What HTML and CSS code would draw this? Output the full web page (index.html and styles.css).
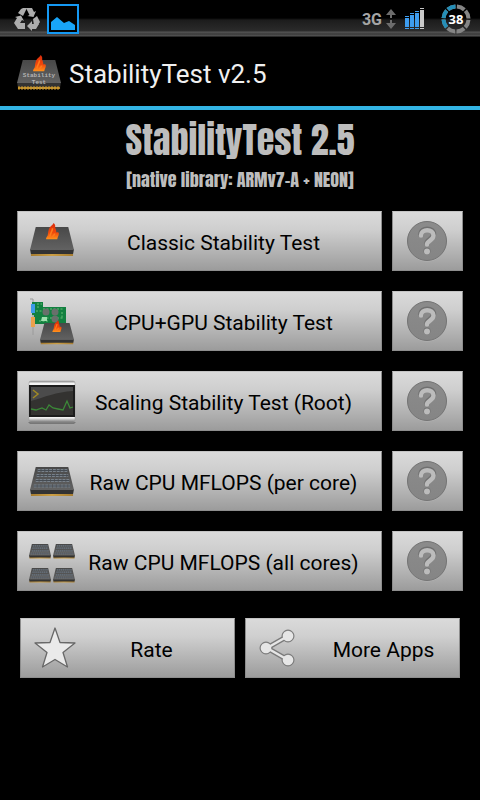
FILE: index.html
```html
<!DOCTYPE html>
<html lang="en">
<head>
<meta charset="utf-8">
<meta name="viewport" content="width=device-width, initial-scale=1">
<title>StabilityTest v2.5</title>
<link rel="stylesheet" href="styles.css">
</head>
<body>
<svg class="defs" aria-hidden="true">
  <defs>
    <linearGradient id="slab" x1="0" y1="0" x2="0" y2="1"><stop offset="0" stop-color="#484848"/><stop offset="1" stop-color="#626262"/></linearGradient>
    <linearGradient id="fire" x1="0" y1="0" x2="0" y2="1"><stop offset="0" stop-color="#d92a0a"/><stop offset=".6" stop-color="#f04a0c"/><stop offset="1" stop-color="#ff941c"/></linearGradient>
    <linearGradient id="gold"><stop offset="0" stop-color="#a67c30"/><stop offset=".5" stop-color="#cc9f45"/><stop offset="1" stop-color="#a67c30"/></linearGradient>
    <linearGradient id="metal" x1="0" y1="0" x2="0" y2="1"><stop offset="0" stop-color="#8c8c8c"/><stop offset=".06" stop-color="#f4f4f4"/><stop offset=".9" stop-color="#f0f0f0"/><stop offset="1" stop-color="#777"/></linearGradient>
    <linearGradient id="disc" x1="0" y1="0" x2="0" y2="1"><stop offset="0" stop-color="#8b8b8b"/><stop offset="1" stop-color="#858585"/></linearGradient>
    <symbol id="chip" viewBox="0 0 46 30" preserveAspectRatio="none">
      <path d="M1 25h44v4H1z" fill="url(#gold)"/>
      <path d="M0 22l1 5h44l1-5z" fill="#333"/>
      <path d="M6 0h34l6 23H0z" fill="url(#slab)"/>
    </symbol>
    <symbol id="flame" viewBox="0 0 16 18">
      <path d="M9 0c1 1 2 2 1.500 4 0 1 1.500 3 1 5 1.500-.5 2.500 0 2.500 1 0 2-1 3-1.500 5.500H2c-.5-1.500 1-2.500 1.500-4C4 9 4 6 5.500 4 6.500 2.500 8.500 2 9 0z" fill="url(#fire)"/>
      <path d="M8 5c0 3-2 4-2.500 8M10 10c0 2-2 2-2.500 4" fill="none" stroke="#ff7a1a" stroke-width="1.500"/>
    </symbol>
    <symbol id="grid-chip" viewBox="0 0 46 30" preserveAspectRatio="none">
      <use href="#chip" width="46" height="30"/>
      <g fill="none" stroke="#77818b" stroke-width="3" stroke-dasharray="3 1">
        <path d="M8 3.500h31"/><path d="M7 8.500h33"/><path d="M6 13.500h35"/><path d="M4 19h38"/>
      </g>
      <g fill="none" stroke="#454b52" stroke-width="1"><path d="M8 3.500h31M7 8.500h33M6 13.500h35M4 19h38"/></g>
    </symbol>
    <symbol id="help" viewBox="0 0 42 42">
      <circle cx="20" cy="21.500" r="20" fill="#b4b4b4"/>
      <circle cx="20" cy="21" r="19.500" fill="url(#disc)" stroke="#747474"/>
      <path d="M14 15.500c0-7 12.500-7 12.500 0 0 5-6.500 5-6.500 9" transform="translate(0 -1)" fill="none" stroke="#707070" stroke-width="5.500" stroke-linecap="round"/>
      <path d="M14 15.500c0-7 12.500-7 12.500 0 0 5-6.500 5-6.500 9" fill="none" stroke="#bcbcbc" stroke-width="4.500" stroke-linecap="round"/>
      <circle cx="20" cy="31" r="3.500" fill="#707070"/>
      <circle cx="20" cy="31.500" r="3" fill="#bcbcbc"/>
    </symbol>
  </defs>
</svg>

<div class="status">
  <svg class="recycle" viewBox="0 0 26 24" aria-hidden="true">
    <g fill="#adadad">
      <path d="M9 1h4l-4 8-5-3 3-4z"/>
      <path d="M12 1h6l2 4 2-1-2.500 6-6-1 2-1z"/>
      <path d="M1 10l6-1.500 3 5.500-2-1-2 3H0l3-5z"/>
      <path d="M0 16l1 0h10v6H4z"/>
      <path d="M19 12l4-3 3 6-2 3h-4z"/>
      <path d="M25 17l-3 5h-4v2l-5-5 5-5v3z"/>
    </g>
  </svg>
  <svg class="picture" viewBox="0 0 32 30" aria-hidden="true">
    <rect x="1" y="1" width="30" height="28" fill="#000" stroke="#1599f4" stroke-width="2"/>
    <path d="M4 26v-8l6-5 7 6 5-2 6 4v5z" fill="#18a5f8"/>
  </svg>
  <span class="network">3G</span>
  <svg class="arrows" viewBox="0 0 10 20" aria-hidden="true"><path d="M5 0l5 6H6v3H4V6H0zM5 20l5-6H6v-3H4v3H0z" fill="#6d6d6d"/></svg>
  <svg class="signal" viewBox="0 0 20 22" aria-hidden="true">
    <g fill="#3d9df0"><path d="M0 10h4v9H0zM5 7h4v12H5zM10 5h4v14h-4z"/><path d="M0 20h4v1H0zM5 20h4v1H5zM10 20h4v1h-4zM0 8h4v1H0zM5 5h4v1H5zM10 3h4v1h-4z"/></g>
    <path d="M15 2h4v17h-4zM15 20h4v1h-4zM15 0h4v1h-4z" fill="#c9c9c9"/>
  </svg>
  <span class="battery">
    <svg viewBox="0 0 30 30" aria-hidden="true">
      <g fill="none" stroke-width="4">
        <circle cx="15" cy="15" r="12.500" pathLength="80" stroke="#858585" stroke-dasharray="8.500 1.500" transform="rotate(-86 15 15)"/>
        <circle cx="15" cy="15" r="12.500" pathLength="80" stroke="#258fb8" stroke-dasharray="0 50 8.500 1.500 8.500 1.500 8.500 80" transform="rotate(-86 15 15)"/>
      </g>
    </svg>
    <span class="level">38</span>
  </span>
</div>

<header class="bar">
  <svg class="logo" viewBox="0 0 46 40" aria-hidden="true">
    <use href="#chip" x="1" y="8" width="44" height="30"/>
    <path d="M2 36h42" stroke="#c8962c" stroke-width="3" stroke-dasharray="2 1"/>
    <use href="#flame" x="15" y="3" width="17" height="19"/>
    <text class="logo-text" x="23" y="25">Stability</text>
    <text class="logo-text" x="23" y="32">Test</text>
  </svg>
  <span class="bar-title">StabilityTest v2.5</span>
</header>

<main>
  <h1>StabilityTest 2.5</h1>
  <p class="library">[native library: ARMv7-A + NEON]</p>

  <div class="tests">
    <div class="row">
      <button class="btn" type="button">
        <svg class="icon" viewBox="0 0 48 48" aria-hidden="true"><use href="#chip" x="2" y="10" width="44" height="30"/><use href="#flame" x="16" y="6" width="17" height="19"/></svg>
        <span class="label">Classic Stability Test</span>
      </button>
      <button class="btn help" type="button" aria-label="About the classic test"><svg viewBox="0 0 42 42"><use href="#help"/></svg></button>
    </div>
    <div class="row">
      <button class="btn" type="button">
        <svg class="icon" viewBox="0 0 48 48" aria-hidden="true">
          <path d="M2 2h3v36" fill="none" stroke="#9a9a9a"/>
          <path d="M4 5h11v5h23v17H6V18H4z" fill="#128040"/>
          <path d="M9 7h5M9 10h3M8 14h6M15 12h20M11 24h9M34 15v6M15 21h20" stroke="#67bd74" stroke-width="1" stroke-dasharray="2 1.500"/>
          <path d="M14 20h5v4h-6z" fill="#9edfae"/>
          <path d="M3 7h4v9H3z" fill="#3e9be8"/><path d="M3 20h4v10H3z" fill="#eba14c"/>
          <circle cx="18" cy="15" r="3.500" fill="#68706b"/><circle cx="27" cy="15" r="3.500" fill="#68706b"/><circle cx="27" cy="22" r="3.500" fill="#68706b"/>
          <use href="#chip" x="12" y="26" width="34" height="22"/>
          <use href="#flame" x="23" y="23" width="12" height="14"/>
        </svg>
        <span class="label">CPU+GPU Stability Test</span>
      </button>
      <button class="btn help" type="button" aria-label="About the CPU and GPU test"><svg viewBox="0 0 42 42"><use href="#help"/></svg></button>
    </div>
    <div class="row">
      <button class="btn" type="button">
        <svg class="icon" viewBox="0 0 48 48" aria-hidden="true">
          <path d="M0 45h48l-2 2H2z" fill="#777"/>
          <rect x="1" y="4" width="46" height="41" rx="2" fill="url(#metal)" stroke="#999" stroke-width=".5"/>
          <rect x="1" y="8" width="46" height="32" fill="#1c1c1c"/>
          <rect x="3" y="10" width="42" height="28" fill="#333230"/>
          <path d="M3 10h42v4C28 15 17 20 3 24z" fill="#4b4b4b"/>
          <path d="M5 13l5 4-5 4" fill="none" stroke="#a18a24" stroke-width="1.500"/>
          <path d="M3 32l5 1 6-2 4 2 3-5 4 3 5 1 5 1 4-9 3 7 3-1" fill="none" stroke="#3c8838" stroke-width="1.300"/>
        </svg>
        <span class="label">Scaling Stability Test (Root)</span>
      </button>
      <button class="btn help" type="button" aria-label="About the scaling test"><svg viewBox="0 0 42 42"><use href="#help"/></svg></button>
    </div>
    <div class="row">
      <button class="btn" type="button">
        <svg class="icon" viewBox="0 0 48 48" aria-hidden="true"><use href="#grid-chip" x="2" y="10" width="44" height="30"/></svg>
        <span class="label">Raw CPU MFLOPS (per core)</span>
      </button>
      <button class="btn help" type="button" aria-label="About MFLOPS per core"><svg viewBox="0 0 42 42"><use href="#help"/></svg></button>
    </div>
    <div class="row">
      <button class="btn" type="button">
        <svg class="icon" viewBox="0 0 48 48" aria-hidden="true">
          <use href="#grid-chip" x="1" y="7" width="22" height="15"/><use href="#grid-chip" x="25" y="7" width="22" height="15"/>
          <use href="#grid-chip" x="1" y="31" width="22" height="15"/><use href="#grid-chip" x="25" y="31" width="22" height="15"/>
        </svg>
        <span class="label">Raw CPU MFLOPS (all cores)</span>
      </button>
      <button class="btn help" type="button" aria-label="About MFLOPS on all cores"><svg viewBox="0 0 42 42"><use href="#help"/></svg></button>
    </div>
  </div>

  <div class="row links">
    <button class="btn" type="button">
      <svg class="icon" viewBox="0 0 48 48" aria-hidden="true"><path d="M24 4l5 14.500 15 .5-12 9.500 4.500 14.500L24 35.500 11.500 43 16 28.500 4 19l15-.5z" fill="#eaeaea" stroke="#686868" stroke-width="1.300" stroke-linejoin="round"/></svg>
      <span class="label">Rate</span>
    </button>
    <button class="btn" type="button">
      <svg class="icon share" viewBox="0 0 48 48" aria-hidden="true">
        <g stroke="#7a7a7a" fill="#7a7a7a"><path d="M11 24L32 12M11 24l21 12" stroke-width="5"/><circle cx="10" cy="24" r="6"/><circle cx="32" cy="12" r="6"/><circle cx="32" cy="36" r="6"/></g>
        <g stroke="#e6e6e6" fill="#e6e6e6"><path d="M11 24L32 12M11 24l21 12" stroke-width="2.500"/><g stroke="none"><circle cx="10" cy="24" r="5.300"/><circle cx="32" cy="12" r="5.300"/><circle cx="32" cy="36" r="5.300"/></g></g>
      </svg>
      <span class="label">More Apps</span>
    </button>
  </div>
</main>
</body>
</html>
```
FILE: styles.css
```css
* { box-sizing: border-box; }

body {
  margin: 0;
  min-height: 100vh;
  background: #000;
  color: #f0f0f0;
  font-family: Roboto, sans-serif;
}

svg { display: block; flex: none; }

.defs { position: absolute; width: 0; height: 0; }

.status {
  display: flex;
  align-items: center;
  height: 38px;
  padding: 0 9px 0 14px;
  background: linear-gradient(#000 0 18px, #1c1c1c 20px, #2b2b2b 31px, #555 32px, #3a3a3a 34px, #555 36px, #000 37px);
}

.recycle { width: 26px; height: 24px; }
.picture { width: 32px; height: 30px; margin-left: 7px; }
.network {
  margin-left: auto;
  color: #a5a5a5;
  font-size: 16px;
  font-weight: 700;
}
.arrows { width: 10px; height: 20px; margin-left: 4px; }
.signal { width: 20px; height: 22px; margin-left: 9px; }
.battery {
  display: grid;
  place-items: center;
  width: 30px;
  height: 30px;
  margin-left: 16px;
}
.battery > * { grid-area: 1 / 1; }
.battery svg { width: 30px; height: 30px; }
.level {
  color: #fff;
  font: bold 13px "Noto Sans", sans-serif;
}

.bar {
  display: flex;
  align-items: center;
  gap: 7px;
  height: 72px;
  padding: 0 16px;
  border-bottom: 4px solid #33b5e5;
}
.logo { width: 46px; height: 40px; }
.logo-text {
  fill: #b4b4b4;
  font: bold 6px "Liberation Mono", monospace;
  text-anchor: middle;
}
.bar-title { font-size: 26px; line-height: 32px; padding-top: 4px; }

main { padding: 8px 17px 0; }

h1, .library {
  margin: 0;
  color: #bdbdbd;
  font-family: Impact, Anton, "Liberation Sans Narrow", "Roboto Condensed", Roboto, sans-serif;
  font-weight: 400;
  text-align: center;
}
h1 { font-size: 36px; line-height: 44px; }
.library { font-size: 18px; line-height: 24px; padding-top: 6px; }

.tests {
  display: grid;
  gap: 20px;
  margin-top: 19px;
}
.row { display: flex; gap: 10px; }

.btn {
  display: flex;
  flex: 1;
  align-items: center;
  min-width: 0;
  height: 60px;
  padding: 0 10px;
  border: 1px solid #8d8d8d;
  border-top-color: #c4c4c4;
  background: linear-gradient(#dadada, #cfcfcf 30%, #9c9c9c);
  color: #000;
  font: 21px/28px Roboto, sans-serif;
}
.help { flex: 0 0 71px; justify-content: center; }
.help svg { width: 42px; height: 42px; }
.icon { width: 48px; height: 48px; }
.share { margin-right: 14px; }
.label { flex: 1; text-align: center; white-space: nowrap; padding-top: 3px; }

.links { margin: 27px 3px 0; }
```
